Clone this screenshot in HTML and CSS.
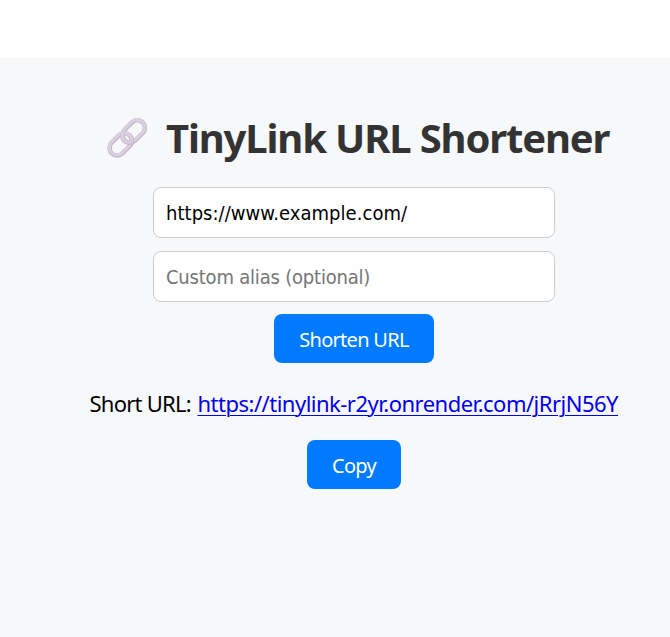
FILE: index.html
```
<!DOCTYPE html>
<html lang="en">
<head>
<meta charset="utf-8">
<title>TinyLink URL Shortener</title>
<link rel="stylesheet" href="styles.css">
</head>
<body>
<main class="page">
  <h1 class="title">
    <svg class="link-icon" viewBox="0 0 42 42" aria-hidden="true">
      <g fill="none">
        <rect class="ring" x="-12.7" y="-7.6" width="25.4" height="15.2" rx="7.6" transform="translate(27.7 14.3) rotate(-45)"/>
        <rect class="shine" x="-12.7" y="-7.6" width="25.4" height="15.2" rx="7.6" transform="translate(27.5 13.9) rotate(-45)"/>
        <rect class="ring" x="-12.7" y="-7.6" width="25.4" height="15.2" rx="7.6" transform="translate(14.7 27.3) rotate(-45)"/>
        <rect class="shine" x="-12.7" y="-7.6" width="25.4" height="15.2" rx="7.6" transform="translate(14.5 26.9) rotate(-45)"/>
        <path class="ring" d="M16.7 17.5C15.6 22.5 20 26.7 25.2 25.2"/>
        <path class="shine" d="M16.5 17.1C15.4 22.1 19.8 26.3 25 24.8"/>
      </g>
    </svg>
    <span class="title-text">TinyLink URL Shortener</span>
  </h1>
  <input class="field url" type="text" value="https://www.example.com/">
  <input class="field alias" type="text" placeholder="Custom alias (optional)">
  <button class="button shorten">Shorten URL</button>
  <p class="result"><span class="label">Short URL:</span><a class="short-link" href="#">https://tinylink-r2yr.onrender.com/jRrjN56Y</a></p>
  <button class="button copy">Copy</button>
</main>
</body>
</html>
```
FILE: styles.css
```
* { box-sizing: border-box; }
body { margin: 0; padding-top: 58px; background: #fff; }
.page {
  min-height: 579px;
  padding: 56px 0 0 38px;
  background: #f7f8fa;
  display: flex;
  flex-direction: column;
  align-items: center;
  font-family: "Noto Sans", "Open Sans", sans-serif;
}
.title {
  margin: 0 0 25px;
  padding-left: 7px;
  height: 48px;
  display: flex;
  align-items: center;
  gap: 18px;
  color: #333;
  font-size: 40px;
  line-height: 48px;
  white-space: nowrap;
}
.title-text { width: 443px; letter-spacing: -1.15px; }
.link-icon { width: 42px; height: 42px; }
.ring { stroke: #b9abc2; stroke-width: 4.4; }
.shine { stroke: #dacfdf; stroke-width: 3.4; }
.field {
  width: 402px;
  height: 51px;
  margin: 0 0 13px;
  padding: 0 12px;
  border: 1px solid #ccc;
  border-radius: 8px;
  background: #fff;
  color: #000;
  font: 20px "DejaVu Sans Condensed", "DejaVu Sans", sans-serif;
}
.alias { margin-bottom: 12px; letter-spacing: -0.2px; }
.url { letter-spacing: 0.04px; }
.field::placeholder { color: #757575; opacity: 1; }
.button {
  height: 49px;
  padding: 2px 0 0;
  border: 0;
  border-radius: 8px;
  background: #007bff;
  color: #fff;
  font: 20px/47px "Noto Sans", sans-serif;
  letter-spacing: -0.7px;
}
.shorten { width: 160px; }
.copy { width: 94px; }
.result {
  margin: 25px 0 21px;
  height: 31px;
  display: flex;
  font-size: 22px;
  line-height: 31px;
  white-space: nowrap;
}
.label { width: 108px; letter-spacing: -0.75px; }
.short-link {
  width: 421px;
  color: #00e;
  letter-spacing: -0.51px;
  text-decoration: underline;
  text-decoration-thickness: 1px;
  text-underline-offset: 3px;
}
```
